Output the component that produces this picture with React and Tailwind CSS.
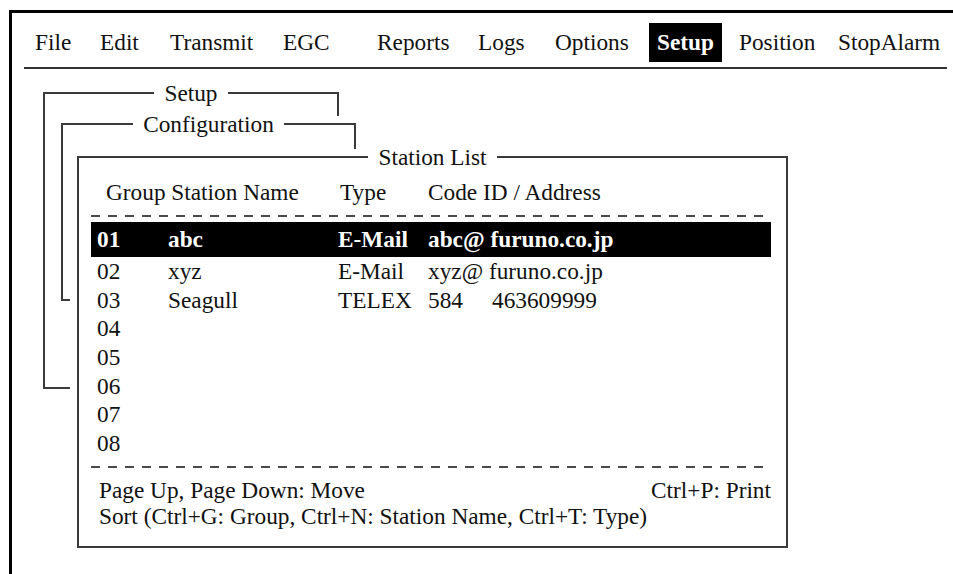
import React from "react";

const menuItems = [
	{ label: "File", w: "w-[65px]" },
	{ label: "Edit", w: "w-[70px]" },
	{ label: "Transmit", w: "w-[113px]" },
	{ label: "EGC", w: "w-[94px]" },
	{ label: "Reports", w: "w-[101px]" },
	{ label: "Logs", w: "w-[77px]" },
	{ label: "Options", w: "w-[94px]" },
];

const stations = [
	{ group: "01", name: "abc", type: "E-Mail", code: "abc@ furuno.co.jp", active: true },
	{ group: "02", name: "xyz", type: "E-Mail", code: "xyz@ furuno.co.jp" },
	{ group: "03", name: "Seagull", type: "TELEX", code: "584", id: "463609999" },
	{ group: "04" },
	{ group: "05" },
	{ group: "06" },
	{ group: "07" },
	{ group: "08" },
];

// dashed separator, drawn like the terminal's "- - - -" line
const Dashes = ({ className }) => (
	<div
		className={`h-[2px] w-[680px] bg-[repeating-linear-gradient(90deg,#4a4a4a_0_9px,transparent_9px_17px)] ${className}`}
	/>
);

// window frame with the title sitting on the top border
const Window = ({ title, className, boxClass, children }) => (
	<div className={`absolute bg-white p-[7px] ${className}`}>
		<div className={`border-2 border-[#3a3a3a] ${boxClass}`}>
			<div className="-mt-[14px] flex h-[26px] justify-center">
				<span className="bg-white px-[10px] leading-[26px]">{title}</span>
			</div>
			{children}
		</div>
	</div>
);

const App = () => {
	return (
		<div className="h-[574px] w-[953px] overflow-hidden bg-white font-['Liberation_Serif',serif] text-[23.3px] text-[#111]">
			{/* outer screen frame */}
			<div className="ml-[9px] mt-[10px] h-[600px] w-[980px] border-l-[3px] border-t-[3px] border-black">
				{/* Menu bar */}
				<div className="mt-[10px] flex h-[39px] items-center pl-[23px]">
					{menuItems.map((item) => (
						<span key={item.label} className={`${item.w} leading-[39px]`}>
							{item.label}
						</span>
					))}
					<span className="flex h-[39px] w-[73px] items-center justify-center bg-black font-bold text-white">
						Setup
					</span>
					<span className="ml-[17px] w-[99px]">Position</span>
					<span>StopAlarm</span>
				</div>
				<div className="ml-[12px] mt-[5px] h-[2px] w-[923px] bg-[#333]" />

				{/* stacked windows */}
				<div className="relative h-[505px]">
					<Window title="Setup" className="left-[24px] top-[16px]" boxClass="h-[297px] w-[296px]" />
					<Window title="Configuration" className="left-[42px] top-[47px]" boxClass="h-[178px] w-[295px]" />
					<Window title="Station List" className="left-[58px] top-[80px]" boxClass="h-[392px] w-[711px]">
						<div className="pl-[12px]">
							{/* header */}
							<div className="mt-[8px] grid h-[29px] w-[680px] grid-cols-[234px_88px_1fr] items-center pl-[15px] leading-[29px]">
								<span>Group Station Name</span>
								<span>Type</span>
								<span>Code ID / Address</span>
							</div>
							<Dashes className="mt-[8px]" />

							{/* rows */}
							<div className="mt-[8px]">
								{stations.map((s) =>
									s.active ? (
										<div
											key={s.group}
											className="-my-[3px] grid h-[35px] w-[680px] grid-cols-[71px_170px_90px_1fr] items-center bg-black pl-[6px] font-bold text-white"
										>
											<span>{s.group}</span>
											<span>{s.name}</span>
											<span>{s.type}</span>
											<span>{s.code}</span>
										</div>
									) : (
										<div
											key={s.group}
											className="grid h-[28.7px] w-[680px] grid-cols-[71px_170px_90px_1fr] items-center pl-[6px]"
										>
											<span>{s.group}</span>
											<span>{s.name}</span>
											<span>{s.type}</span>
											<span className="flex">
												<span className={s.id ? "w-[64px]" : ""}>{s.code}</span>
												{s.id && <span>{s.id}</span>}
											</span>
										</div>
									)
								)}
							</div>

							<Dashes className="mt-[11px]" />
							<div className="mt-[9px] w-[680px] pl-[8px] leading-[26px]">
								<div className="flex justify-between">
									<span>Page Up, Page Down: Move</span>
									<span>Ctrl+P: Print</span>
								</div>
								<div>Sort (Ctrl+G: Group, Ctrl+N: Station Name, Ctrl+T: Type)</div>
							</div>
						</div>
					</Window>
				</div>
			</div>
		</div>
	);
};

export default App;
